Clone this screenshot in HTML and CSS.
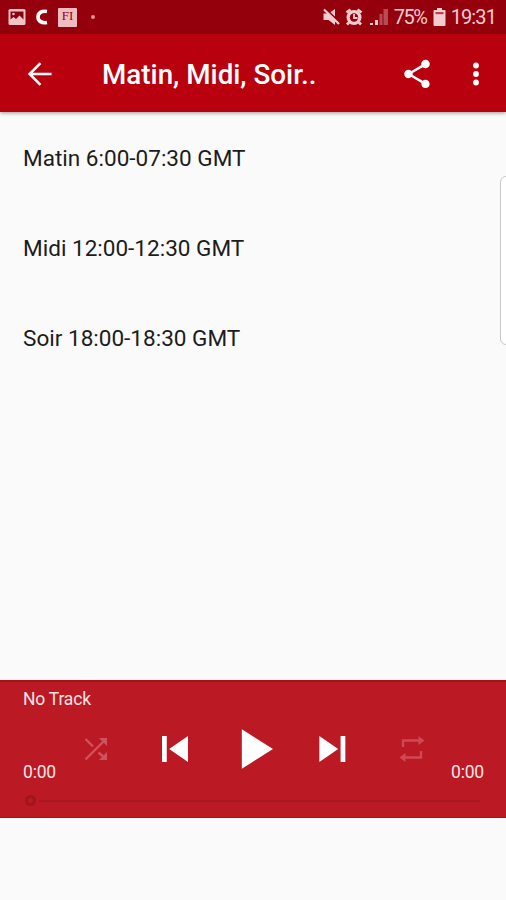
FILE: index.html
```
<!DOCTYPE html>
<html lang="fr">
<head>
    <meta charset="UTF-8">
    <title>Matin, Midi, Soir..</title>
    <link rel="stylesheet" href="styles.css">
</head>
<body>
<div class="status-bar">
    <div class="status-left">
        <svg width="18" height="18" viewBox="0 0 18 18">
            <rect x="0.5" y="1" width="17" height="16" rx="1.5" fill="#f2c4c8"/>
            <path d="M2.500 3.500h13v8l-4-4-3.500 3.500-2.500-2-3 2.500z" fill="#8b000a"/>
            <circle cx="5.500" cy="6" r="1.300" fill="#f2c4c8"/>
        </svg>
        <svg width="12" height="18" viewBox="0 0 12 18">
            <path d="M11 3.500C5.500 2.500 2 5 2 9s3.500 6.500 9 5.500" fill="none" stroke="#fff" stroke-width="3.600"/>
        </svg>
        <span class="app-badge">FI</span>
        <span class="dot"></span>
    </div>
    <div class="status-right">
        <svg class="mute" width="17" height="18" viewBox="0 0 17 18">
            <path d="M0.500 5.500h5l6.500-4.500v16l-6.500-5h-5z" fill="#f4cccf"/>
            <path d="M2.500 1l14.500 13.500" stroke="#94000b" stroke-width="2"/>
            <path d="M1 1.500l15 14.500" stroke="#f4cccf" stroke-width="2.200"/>
        </svg>
        <svg class="alarm" width="18" height="18" viewBox="0 0 18 18">
            <circle cx="9" cy="9.500" r="7.500" fill="#f4cccf"/>
            <path d="M1.500 4.500l4-3M16.500 4.500l-4-3M4 14.500l-2 2M14 14.500l2 2" stroke="#f4cccf" stroke-width="2.800"/>
            <circle cx="9" cy="9.500" r="4.200" fill="#94000b"/>
            <path d="M9 6v4h3.500" fill="none" stroke="#f4cccf" stroke-width="1.800"/>
        </svg>
        <svg class="signal" width="18" height="18" viewBox="0 0 18 18">
            <path d="M0 15h3v2H0zM5 12h3v5H5z" fill="#f4cccf"/>
            <path d="M9.500 6h3v11h-3zM13.500 1H18v16h-4.500z" fill="#b84c54"/>
        </svg>
        <span class="percent">75%</span>
        <svg class="battery" width="13" height="18" viewBox="0 0 13 18">
            <path d="M4 0h5v2h2.500q1 0 1 1v14q0 1-1 1h-10q-1 0-1-1V3q0-1 1-1H4z" fill="#f4cccf"/>
            <path d="M2.500 4h8v2.200h-8z" fill="#b3444d"/>
        </svg>
        <span class="clock">19:31</span>
    </div>
</div>

<header class="app-bar">
    <svg class="back" width="36" height="36" viewBox="0 0 24 24" fill="none" stroke="#fff" stroke-width="1.700">
        <path d="M19.700 12H5.500M12.300 4.800L5.100 12l7.200 7.200"/>
    </svg>
    <h1 class="title">Matin, Midi, Soir..</h1>
    <svg class="share" width="34" height="34" viewBox="0 0 24 24" fill="#fff">
        <path d="M18 16.080c-.76 0-1.440.3-1.960.77L8.910 12.700c.05-.23.090-.46.090-.7s-.04-.47-.09-.7l7.050-4.110c.54.5 1.250.81 2.040.81 1.660 0 3-1.340 3-3s-1.340-3-3-3-3 1.340-3 3c0 .24.040.47.090.7L8.040 9.810C7.500 9.310 6.790 9 6 9c-1.660 0-3 1.340-3 3s1.340 3 3 3c.79 0 1.500-.31 2.040-.81l7.120 4.160c-.05.21-.08.430-.08.650 0 1.610 1.310 2.920 2.920 2.920s2.920-1.310 2.920-2.920-1.310-2.920-2.920-2.920z"/>
    </svg>
    <svg class="more" width="8" height="24" viewBox="0 0 8 24" fill="#fff">
        <circle cx="4" cy="3.500" r="2.900"/>
        <circle cx="4" cy="12" r="2.900"/>
        <circle cx="4" cy="20.500" r="2.900"/>
    </svg>
</header>

<main class="content">
    <ul class="schedule">
        <li>Matin 6:00-07:30 GMT</li>
        <li>Midi 12:00-12:30 GMT</li>
        <li>Soir 18:00-18:30 GMT</li>
    </ul>
    <div class="edge-handle"></div>
</main>

<section class="player">
    <div class="track">No Track</div>
    <div class="player-row">
        <span class="time">0:00</span>
        <div class="controls">
            <svg width="24" height="24" viewBox="0 0 24 24" fill="none" stroke="#d0525c" stroke-width="2.400">
                <path d="M1.500 22.500L21 3M1.500 2l7.500 7.500M14.500 15.500L21 21"/>
                <path d="M15 1h8v8zM15 23h8v-8z" fill="#d0525c" stroke="none"/>
            </svg>
            <svg width="52" height="52" viewBox="0 0 24 24" fill="#fff">
                <path d="M6 6h2.200v12H6zm3.300 6l8.700 6V6z"/>
            </svg>
            <svg class="play" width="68" height="68" viewBox="0 0 24 24" fill="#fff">
                <path d="M7.700 5v14l11-7z"/>
            </svg>
            <svg width="52" height="52" viewBox="0 0 24 24" fill="#fff">
                <path d="M5.700 18l8.700-6-8.700-6zm9.800-12v12h2.200V6z"/>
            </svg>
            <svg width="26" height="28" viewBox="0 0 26 28">
                <path d="M4 12V5.500h17M22 16v6.500H5" fill="none" stroke="#cf4954" stroke-width="2.400"/>
                <path d="M19.500 1l6 4.500-6 4.500zM6.500 18l-6 4.500 6 4.500z" fill="#cf4954"/>
            </svg>
        </div>
        <span class="time">0:00</span>
    </div>
    <div class="seek">
        <span class="seek-thumb"></span>
        <span class="seek-line"></span>
    </div>
</section>
</body>
</html>
```
FILE: styles.css
```
* {
    box-sizing: border-box;
}
body {
    margin: 0;
    height: 900px;
    display: flex;
    flex-direction: column;
    background-color: #fafafa;
    font-family: Roboto, "Liberation Sans", sans-serif;
    overflow: hidden;
}
svg {
    display: block;
    flex-shrink: 0;
}
.status-bar {
    height: 34px;
    flex-shrink: 0;
    display: flex;
    justify-content: space-between;
    align-items: center;
    padding: 0 10px 0 8px;
    background-color: #94000b;
    color: #f4cccf;
}
.status-left,
.status-right {
    display: flex;
    align-items: center;
}
.status-left {
    gap: 10px;
}
.app-badge {
    width: 19px;
    height: 19px;
    border-radius: 1px;
    background-color: #f0bcc1;
    color: #94000b;
    font: 13px/15px "Liberation Serif", serif;
    text-align: center;
}
.dot {
    width: 4px;
    height: 4px;
    margin-left: 4px;
    border-radius: 50%;
    background-color: #e88f8f;
}
.alarm {
    margin-left: 5px;
}
.signal {
    margin-left: 7px;
}
.percent,
.clock {
    font-size: 20px;
    line-height: 36px;
    white-space: nowrap;
}
.percent {
    width: 34px;
    margin-left: 6px;
    letter-spacing: -1.4px;
}
.battery {
    margin-left: 5px;
}
.clock {
    margin-left: 5px;
    letter-spacing: -0.9px;
}
.app-bar {
    height: 78px;
    flex-shrink: 0;
    display: flex;
    align-items: center;
    padding: 1px 26px 0 22px;
    background-color: #b9000e;
    box-shadow: 0 1px 4px rgba(0, 0, 0, 0.4);
    z-index: 1;
}
.title {
    flex: 1;
    margin: 3px 0 0 44px;
    color: #fff;
    font-size: 27.800px;
    font-weight: 500;
    line-height: 34px;
    white-space: nowrap;
}
.share {
    margin-right: 38px;
}
.content {
    flex: 1;
    position: relative;
}
.schedule {
    margin: 0;
    padding: 1px 23px 0;
    list-style: none;
}
.schedule li {
    height: 90px;
    line-height: 91px;
    color: #1c1c1c;
    font-size: 22.550px;
}
.edge-handle {
    position: absolute;
    top: 64px;
    right: -6px;
    width: 12px;
    height: 169px;
    border: 1px solid #c8c8c8;
    border-radius: 8px;
    background-color: #fff;
}
.player {
    height: 138px;
    flex-shrink: 0;
    margin-bottom: 82px;
    padding: 8px 22px 0 23px;
    background-color: #bb1924;
    border-top: 2px solid #ae0d17;
    border-bottom: 1px solid #ae0d17;
    color: #fbe3e4;
}
.track {
    font-size: 17.500px;
    line-height: 18px;
    letter-spacing: -0.2px;
}
.player-row {
    display: grid;
    grid-template-columns: 33px 395px 33px;
    height: 81px;
}
.time {
    align-self: end;
    padding-bottom: 7px;
    font-size: 17.500px;
    line-height: 20px;
    letter-spacing: -0.2px;
    white-space: nowrap;
}
.controls {
    display: grid;
    grid-template-columns: repeat(5, 79px);
    justify-items: center;
    align-items: center;
}
.seek {
    display: flex;
    align-items: center;
    height: 23px;
    padding-left: 2px;
}
.seek-thumb {
    width: 11px;
    height: 11px;
    border: 3px solid #9f1520;
    border-radius: 50%;
}
.seek-line {
    flex: 1;
    height: 2px;
    margin: 0 4px 0 3px;
    background-color: #a71721;
}
```
